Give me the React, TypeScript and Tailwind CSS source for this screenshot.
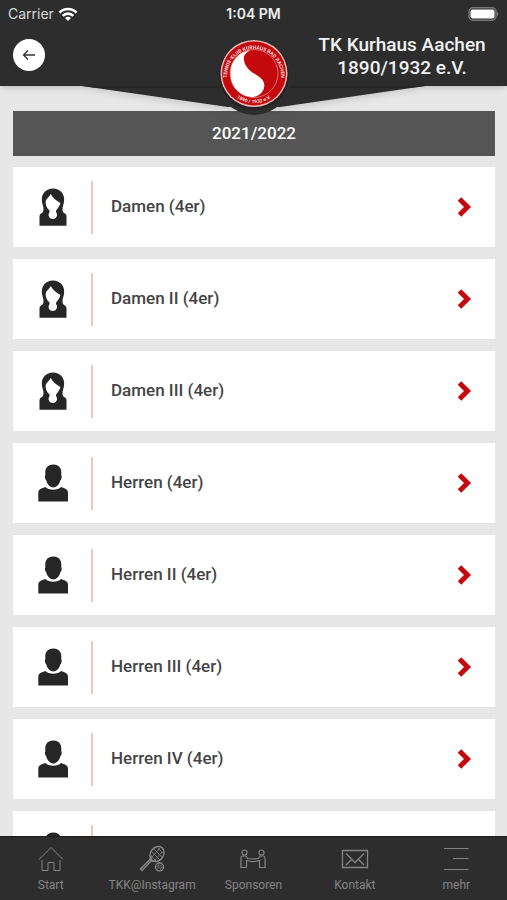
import React from 'react';

type Team = { name: string; women: boolean };

const teams: Team[] = [
  { name: "Damen (4er)", women: true },
  { name: "Damen II (4er)", women: true },
  { name: "Damen III (4er)", women: true },
  { name: "Herren (4er)", women: false },
  { name: "Herren II (4er)", women: false },
  { name: "Herren III (4er)", women: false },
  { name: "Herren IV (4er)", women: false },
  { name: "", women: false },
];

const WomanIcon = () => (
  <svg viewBox="0 0 32 40" className="h-10 w-8 text-[#262626]" fill="currentColor" aria-hidden="true">
    <path
      fillRule="evenodd"
      d="M16 1.500C9 1.500 4.800 6.500 4.800 12.500c0 4.500 2 7 1.700 10 0 1.500-.5 2.500-1.500 3.500-1.500.8-2.500 1.500-2.500 3.500v9.200h27v-9.200c0-2-1-2.700-2.500-3.500-1-1-1.500-2-1.500-3.500-.3-3 1.700-5.500 1.700-10C27.200 6.500 23 1.500 16 1.500ZM13.700 7c2 4 6 7 9.800 9-1 3-2.500 5.500-4.300 7.200l-.2 1.800c2.500 3.500 0 7-3.200 7s-5.700-3.500-3.200-7l-.2-1.800C10 21.500 8.300 18 8.700 14.700 9 11.500 12.500 10 13.700 7Z"
    />
  </svg>
);

const ManIcon = () => (
  <svg viewBox="0 0 32 40" className="h-10 w-8 text-[#262626]" fill="currentColor" aria-hidden="true">
    <path d="M16.300 1.500c-6 0-8 4-8 8v3c-1 1 0 4 1 5 1 4 4 7 7 7s6-3 7-7c1-1 2-4 1-5v-3c0-4-2-8-8-8Z" />
    <path d="M8.500 24c3 3.500 12.500 3.500 15.500 0 4 1.500 7 2 7 6v8.500H1.300V30c0-4 3.200-4.500 7.200-6Z" />
  </svg>
);

const StatusBar = () => (
  <div className="grid h-7 grid-cols-3 items-center px-2 font-['Inter',sans-serif]">
    <div className="flex items-center gap-1 text-sm text-[#d8d8d8]">
      Carrier
      <svg viewBox="0 0 20 15" className="h-4 w-5" fill="none" stroke="white" strokeWidth="2.6" aria-hidden="true">
        <path d="M1.5 6a12 12 0 0 1 17 0M4.7 9.3a7.5 7.5 0 0 1 10.6 0" />
        <path d="M7 11.6a4.2 4.2 0 0 1 6 0L10 14.6Z" fill="white" stroke="none" />
      </svg>
    </div>
    <div className="text-center text-sm font-semibold text-[#eee]">1:04 PM</div>
    <svg viewBox="0 0 31 14" className="h-[14px] w-[31px] justify-self-end" aria-hidden="true">
      <rect x="1" y="0.75" width="27" height="12.500" rx="4" fill="none" stroke="#777" strokeWidth="1.500" />
      <rect x="2.5" y="2.5" width="24" height="9" rx="2" fill="white" />
      <path d="M29 4.5q2.500 2.5 0 5Z" fill="#777" />
    </svg>
  </div>
);

const ClubLogo = () => (
  <svg viewBox="0 0 80 80" className="absolute top-[34px] left-1/2 h-20 w-20 -translate-x-1/2 overflow-visible" role="img" aria-label="Tennis-Klub Kurhaus Bad Aachen">
    <defs>
      <path id="ring-top" d="M13.300 46A27 27 0 1 1 66.700 46" />
      <path id="ring-bottom" d="M17 58.500A30 30 0 0 0 63 58.500" />
    </defs>
    <circle cx="40" cy="43" r="38" fill="#2d2d2d" />
    <circle cx="40" cy="41" r="35" fill="#1d1d1d" opacity="0.6" />
    <circle cx="40" cy="39.500" r="33.5" fill="#f0b5b5" />
    <circle cx="40" cy="39.500" r="32" fill="#c4090d" />
    <circle cx="40" cy="39.500" r="24" fill="none" stroke="#e98585" strokeWidth="0.8" />
    <path d="M36 16.500C31 19 29 22 30 26.500C31 32 35 36.500 41 40C46 43 50 46 50.300 51C50.500 57 46 62 38 63.200C25 62 16.500 52 16.500 39.500C16.500 27 25 17.500 36 16.500Z" fill="white" />
    <text fill="#f9dcdc" className="font-['Roboto',sans-serif] text-[5px] font-bold">
      <textPath href="#ring-top" startOffset="50%" textAnchor="middle">TENNIS-KLUB KURHAUS BAD AACHEN</textPath>
    </text>
    <text fill="#f9dcdc" className="font-['Roboto',sans-serif] text-[5px] font-bold">
      <textPath href="#ring-bottom" startOffset="50%" textAnchor="middle">1890 / 1932 e.V.</textPath>
    </text>
  </svg>
);

const Header = () => (
  <header className="relative z-10 shrink-0 bg-[#2d2d2d] shadow-md">
    <svg viewBox="0 0 507 40" preserveAspectRatio="none" className="absolute top-full left-0 h-10 w-full drop-shadow-md" aria-hidden="true">
      <path d="M82 0L228 21H280L425 0Z" fill="#2d2d2d" />
      <path d="M82 0H425L410 2H97Z" fill="#252525" />
    </svg>
    <StatusBar />
    <div className="flex h-[58px] items-start justify-between pr-3 pl-[13px]">
      <button type="button" aria-label="Zurück" className="mt-[11px] flex h-8 w-8 items-center justify-center rounded-full bg-white">
        <svg viewBox="0 0 14 12" className="h-3 w-[14px]" fill="none" stroke="#333" strokeWidth="1.3" aria-hidden="true">
          <path d="M13 6H1.500M6 1.500L1.500 6L6 10.500" />
        </svg>
      </button>
      <h1 className="mt-[5px] w-[186px] text-center text-[19px] leading-[23px] font-medium text-[#f2f2f2]">
        TK Kurhaus Aachen 1890/1932 e.V.
      </h1>
    </div>
    <ClubLogo />
  </header>
);

const TeamRow = ({ team }: { team: Team }) => (
  <li>
    <a href="#" className="flex h-20 items-center bg-white pr-[23px]">
      <span className="flex w-20 justify-center">{team.women ? <WomanIcon /> : <ManIcon />}</span>
      <span className="mr-[18px] ml-[-2px] h-[53px] w-[2px] bg-[#f0c4c4]" />
      <span className="flex-1 text-[17px] font-medium text-[#444]">{team.name}</span>
      <svg viewBox="0 0 15 20" className="h-5 w-[15px]" fill="none" stroke="#c4090d" strokeWidth="5" aria-hidden="true">
        <path d="M2.500 2L10.500 10L2.500 18" />
      </svg>
    </a>
  </li>
);

const iconClass = "h-7 w-7";

const tabs = [
  {
    label: "Start",
    icon: (
      <svg viewBox="0 0 28 28" className={iconClass} fill="none" stroke="currentColor" aria-hidden="true">
        <path d="M2 14.500L14 2.500L26 14.500M5 15V25.500H11V17.500H17V25.500H23V15" />
      </svg>
    ),
  },
  {
    label: "TKK@Instagram",
    icon: (
      <svg viewBox="0 0 28 28" className={iconClass} fill="none" stroke="currentColor" aria-hidden="true">
        <ellipse cx="19" cy="9" rx="6.500" ry="8" transform="rotate(38 19 9)" strokeWidth="1.500" />
        <path d="M14 7l8 8M16 4l8 8M20 3l5 5M13 11l5 5M17 15l7-8M14 12l8-9" strokeWidth="0.8" />
        <path d="M13 12.500V16L4 25.500L2.500 24L11.500 15ZM13 16H17" strokeWidth="1.500" />
        <circle cx="21.500" cy="22" r="4" strokeWidth="1.300" />
        <path d="M19 24.500L24 19.500M20.500 19c1 1 0 3-2 3M25 22c-2 0-3 2-2 3" strokeWidth="0.9" />
      </svg>
    ),
  },
  {
    label: "Sponsoren",
    icon: (
      <svg viewBox="0 0 28 28" className={iconClass} fill="none" stroke="currentColor" strokeWidth="1.200" aria-hidden="true">
        <circle cx="5.500" cy="7.500" r="2.500" />
        <circle cx="22.500" cy="7.500" r="2.500" />
        <path d="M3.500 11H7L8.500 13.500L14 14L19.500 13.500L21 11H24.500Q26 11 26 13V22.500H20.500V15.500L16 16.500H12L7.500 15.500V22.500H2V13Q2 11 3.500 11Z" />
      </svg>
    ),
  },
  {
    label: "Kontakt",
    icon: (
      <svg viewBox="0 0 28 28" className={iconClass} fill="none" stroke="currentColor" strokeWidth="1.300" aria-hidden="true">
        <path d="M1.500 5.500H26.500V22.500H1.500ZM5 8.500L14 17.500L23 8.500M5 20L10.500 14.500M23 20L17.500 14.500" />
      </svg>
    ),
  },
  {
    label: "mehr",
    icon: (
      <svg viewBox="0 0 28 28" className={iconClass} fill="none" stroke="currentColor" aria-hidden="true">
        <path d="M2 3.500H26.500M11 13.500H26.500M2 24.500H26.500" />
      </svg>
    ),
  },
];

const TabBar = () => (
  <nav className="z-10 grid h-16 shrink-0 grid-cols-5 border-t border-[#1c1c1c] bg-[#2d2d2d] text-[#858585]">
    {tabs.map((tab) => (
      <a key={tab.label} href="#" className="flex flex-col items-center gap-1 pt-2 text-xs">
        {tab.icon}
        {tab.label}
      </a>
    ))}
  </nav>
);

const App = () => {
  return (
    <div className="flex h-screen flex-col overflow-hidden bg-[#e7e7e7] font-['Roboto',sans-serif]">
      <Header />
      <main className="min-h-0 flex-1 overflow-hidden pt-[25px] pr-3 pl-[13px]">
        <h2 className="flex h-[45px] items-center justify-center bg-[#555] text-[17px] font-medium text-white">2021/2022</h2>
        <ul className="mt-[11px] flex flex-col gap-3">
          {teams.map((team, index) => (
            <TeamRow key={index} team={team} />
          ))}
        </ul>
      </main>
      <TabBar />
    </div>
  );
};

export default App;
